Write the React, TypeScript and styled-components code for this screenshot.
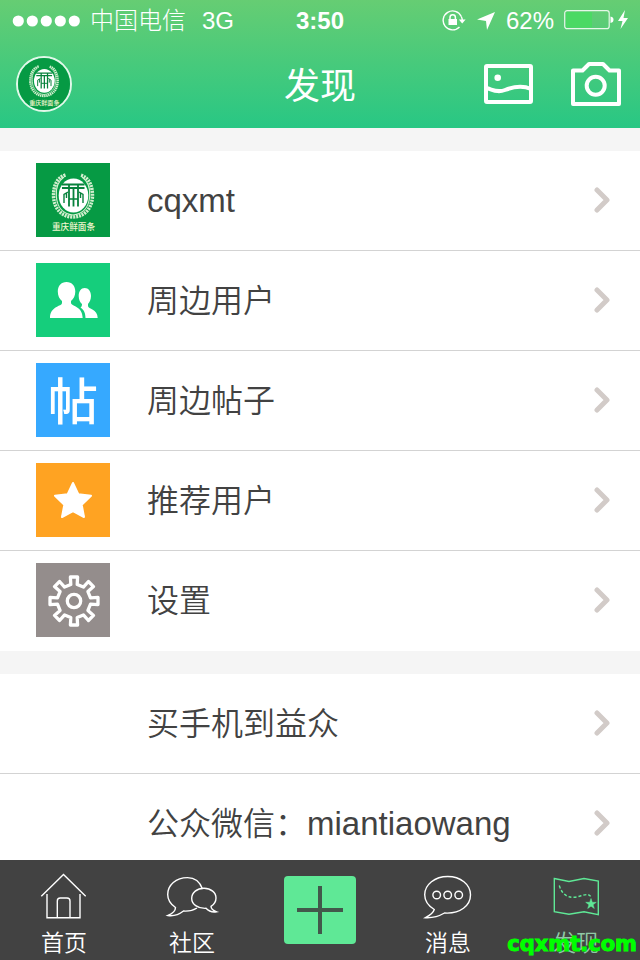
import React from "react";
import styled, { createGlobalStyle } from "styled-components";

const GlobalStyle = createGlobalStyle`
  * { box-sizing: border-box; }
  body {
    margin: 0;
    background: #fff;
    font-family: "Liberation Sans", "Noto Sans CJK SC", sans-serif;
    font-weight: 350;
  }
  button { font: inherit; color: inherit; border: 0; padding: 0; background: none; cursor: pointer; }
  a { color: inherit; text-decoration: none; }
  svg { display: block; flex: none; }
`;

const Screen = styled.div`
  display: flex;
  flex-direction: column;
  height: 100vh;
  background: #f5f5f5;
`;

const Header = styled.header`
  flex: none;
  color: #fff;
  background: linear-gradient(#66cd73, #28c784);
`;

const StatusBar = styled.div`
  display: grid;
  grid-template-columns: 1fr auto 1fr;
  align-items: center;
  height: 40px;
  padding: 2px 12px 0;
  font-size: 24px;
  line-height: 38px;
`;

const StatusGroup = styled.div<{ $end?: boolean }>`
  display: flex;
  align-items: center;
  justify-content: ${(p) => (p.$end ? "flex-end" : "flex-start")};
  gap: 10px;
  white-space: nowrap;
`;

const Carrier = styled.span`
  padding-bottom: 4px;
  font-family: "Noto Sans CJK SC", sans-serif;
  font-weight: 300;
  line-height: 34px;
`;

const Network = styled.span`
  margin-left: 6px;
`;

const Clock = styled.span`
  font-weight: 700;
`;

const NavBar = styled.div`
  display: grid;
  grid-template-columns: 1fr auto 1fr;
  align-items: center;
  height: 88px;
  padding: 0 16px;
`;

const Avatar = styled.button`
  width: 56px;
  height: 56px;
  border: 2px solid #e2f8ea;
  border-radius: 50%;
  overflow: hidden;
`;

const Title = styled.h1`
  margin: 0;
  padding-bottom: 2px;
  font-family: "Noto Sans CJK SC", sans-serif;
  font-size: 36px;
  font-weight: 400;
  line-height: 40px;
`;

const Actions = styled.div`
  display: flex;
  justify-content: flex-end;
  gap: 32px;
`;

const Content = styled.main`
  flex: 1;
  min-height: 0;
  overflow-y: auto;
  scrollbar-width: none;
`;

const Group = styled.ul`
  list-style: none;
  margin: 23px 0 0;
  padding: 0;
  background: #fff;
`;

const Item = styled.li`
  border-bottom: 1px solid #d3d3d3;
  &:last-child { border-color: #fff; }
`;

const RowLink = styled.a`
  display: flex;
  align-items: center;
  padding: 12px 30px 13px 36px;
  color: #424242;
`;

const Tile = styled.span<{ $color: string }>`
  display: flex;
  align-items: center;
  justify-content: center;
  flex: none;
  width: 74px;
  height: 74px;
  background: ${(p) => p.$color};
  color: #fff;
`;

const TileGlyph = styled.span`
  padding-bottom: 4px;
  font-family: "Noto Sans CJK SC", sans-serif;
  font-size: 50px;
  font-weight: 500;
  line-height: 70px;
`;

const RowLabel = styled.span`
  flex: 1;
  margin-left: 37px;
  padding-bottom: 4px;
  font-family: "Noto Sans CJK SC", sans-serif;
  font-size: 32px;
  line-height: 40px;
`;

const Latin = styled.span`
  font-family: "Liberation Sans", sans-serif;
  font-size: 33px;
  line-height: 0;
`;

const TabBar = styled.nav`
  position: relative;
  flex: none;
  display: grid;
  grid-template-columns: repeat(5, 1fr);
  height: 100px;
  background: #424242;
`;

const Tab = styled.a<{ $active?: boolean }>`
  display: flex;
  flex-direction: column;
  align-items: center;
  gap: 9px;
  padding-top: 12px;
  color: ${(p) => (p.$active ? "#5fe896" : "#fff")};
  font-family: "Noto Sans CJK SC", sans-serif;
  font-size: 23px;
  line-height: 24px;
`;

const TabText = styled.span<{ $active?: boolean }>`
  color: ${(p) => (p.$active ? "#8fc9a6" : "#fff")};
`;

const AddButton = styled.button`
  place-self: center;
  display: flex;
  align-items: center;
  justify-content: center;
  width: 72px;
  height: 68px;
  border-radius: 4px;
  && { background: #5fe896; }
`;

const Watermark = styled.span`
  position: absolute;
  right: 3px;
  bottom: 4px;
  color: #00ff00;
  font-family: "DejaVu Sans", sans-serif;
  font-size: 21px;
  font-weight: 700;
  line-height: 24px;
  -webkit-text-stroke: 1px #00ff00;
  pointer-events: none;
`;

function Emblem({ size }: { size: number }) {
  return (
    <svg width={size} height={size} viewBox="0 0 74 74">
      <rect width="74" height="74" fill="#069a44" />
      <g fill="none" stroke="#d3efcf">
        <path d="M29.500 12C20 15 17.500 24 17.500 33C18 46 26 54 37 54C48 54 56 46 56.500 33C56.500 24 54 15 44.500 12" strokeWidth="3.500" strokeDasharray="2 0.900" />
        <path d="M28 14C21 19 19.800 26 20.300 33C21 44 27 51 37 52C47 51 53 44 53.700 33C54.200 26 53 19 46 14" strokeWidth="1.200" />
      </g>
      <ellipse cx="37.500" cy="32.500" rx="14.800" ry="17" fill="#fff" />
      <g fill="none" stroke="#08823c" strokeWidth="1.800">
        <path d="M26 21.500H48.500M26 25H48.500M33 21V43.500M42 21V43.500M37.500 25V43.500" />
        <path d="M28 40V31.500L32 29M47 40V31.500L43 29M30.500 30V35M44.500 30V35M33 36H42" strokeWidth="1.400" />
      </g>
      <text x="37.500" y="66.500" textAnchor="middle" fontFamily="Noto Sans CJK SC, sans-serif" fontSize="8.600" fontWeight="500" fill="#f2f6cf">重庆鲜面条</text>
    </svg>
  );
}

function SignalDots() {
  return (
    <svg width="68" height="12" viewBox="0 0 68 12" fill="#fff">
      {[0, 1, 2, 3, 4].map((i) => (
        <circle key={i} cx={6.3 + i * 14} cy="6" r="5.600" />
      ))}
    </svg>
  );
}

function RotationLock() {
  return (
    <svg width="24" height="22" viewBox="0 0 24 22" fill="none" stroke="#fff">
      <path d="M19.300 6.500A9.500 9.500 0 1 0 17.500 17" strokeWidth="1.400" />
      <path d="M19.300 6.500Q20.300 8.500 20.300 11" strokeWidth="1.400" />
      <path d="M16.800 9.500H23.600L20.200 13.500Z" fill="#fff" stroke="none" />
      <rect x="6.500" y="9" width="8.500" height="6" fill="#fff" stroke="none" />
      <path d="M8 9.500V7.500a2.700 2.700 0 0 1 5.400 0V9.500" strokeWidth="1.500" />
    </svg>
  );
}

function LocationArrow() {
  return (
    <svg width="20" height="20" viewBox="0 0 20 20" fill="#fff">
      <path d="M1 8.500L19 1L11 19L10 10Z" />
    </svg>
  );
}

function Battery() {
  return (
    <svg width="64" height="22" viewBox="0 0 64 22" fill="none">
      <rect x="0.700" y="0.700" width="44.500" height="18" rx="2.500" stroke="#e5f8e8" strokeWidth="1.200" />
      <rect x="2" y="2" width="26" height="15.500" rx="1" fill="#4bd964" />
      <path d="M46.500 6.500Q49.500 7 49.500 9.700T46.500 13Z" fill="#fff" />
      <path d="M61 0L54 11H58.500L56.500 19L64 8H59.500Z" fill="#fff" />
    </svg>
  );
}

function PictureIcon() {
  return (
    <svg width="56" height="48" viewBox="0 0 56 48" fill="none" stroke="#fff" strokeWidth="4" strokeLinejoin="round">
      <rect x="6" y="6" width="45" height="36" rx="1" />
      <circle cx="17.700" cy="17.700" r="3.300" fill="#fff" stroke="none" />
      <path d="M6 28C13 29.500 17 33 25 30C34 26.500 42 25 51 29" />
    </svg>
  );
}

function CameraIcon() {
  return (
    <svg width="56" height="48" viewBox="0 0 56 48" fill="none" stroke="#fff" strokeWidth="4" strokeLinejoin="round">
      <path d="M5 10.500H14.500L21 4H35L41.500 10.500H51V44H5Z" />
      <circle cx="27.700" cy="25.700" r="9" />
    </svg>
  );
}

function Chevron() {
  return (
    <svg width="16" height="26" viewBox="0 0 16 26" fill="none" stroke="#d2cbc8" strokeWidth="5" strokeLinecap="round">
      <path d="M3 3L13 13L3 23" strokeLinejoin="round" />
    </svg>
  );
}

function PeopleIcon() {
  return (
    <svg width="74" height="74" viewBox="0 0 74 74" fill="#fff">
      <path d="M30.500 19C36 19 39.300 23 39.300 28.500C39.300 33 37.500 36 35 38V40C35 43 46.700 43 46.700 55H14C14 43 26 43.500 26 40V38C23.500 36 21.800 33 21.800 28.500C21.800 23 25 19 30.500 19Z" />
      <path d="M48.700 25C52.500 25 55 28.500 55 33C55 36.500 53.500 39.500 52 41V43C52 46 61.700 46 61.700 55H49.500C49.500 49 47 46 44.500 44.500C45.500 44 46 43 46 41C44.300 39.500 42.700 37 42.700 33C42.700 28.500 45 25 48.700 25Z" />
    </svg>
  );
}

function StarIcon() {
  return (
    <svg width="74" height="74" viewBox="0 0 74 74" fill="#fff" stroke="#fff" strokeWidth="2" strokeLinejoin="round">
      <path d="M37 20L42.300 31.200L55 32.800L45.700 41.800L48 54L37 48.200L26 54L28.300 41.800L19 32.800L31.700 31.200Z" />
    </svg>
  );
}

const gearPath =
  Array.from({ length: 8 }, (_, k) => {
    const a = (k * Math.PI) / 4;
    const at = (r: number, w: number) =>
      `${(38 + r * Math.cos(a) - w * Math.sin(a)).toFixed(2)} ${(38 + r * Math.sin(a) + w * Math.cos(a)).toFixed(2)}`;
    return `${k ? "L" : "M"}${at(16.5, -3.2)}L${at(24, -3.6)}L${at(24, 3.6)}L${at(16.5, 3.2)}`;
  }).join("") + "Z";

function GearIcon() {
  return (
    <svg width="74" height="74" viewBox="0 0 74 74" fill="none" stroke="#fff" strokeWidth="3.300" strokeLinejoin="round">
      <path d={gearPath} />
      <circle cx="38" cy="38" r="6.700" />
    </svg>
  );
}

function TabIcon({ children }: { children: React.ReactNode }) {
  return (
    <svg width="56" height="48" viewBox="0 0 56 48" fill="none" stroke="currentColor" strokeWidth="1.400">
      {children}
    </svg>
  );
}

const rows = [
  { color: "#069a44", icon: <Emblem size={74} />, label: <Latin>cqxmt</Latin> },
  { color: "#15ce7c", icon: <PeopleIcon />, label: "周边用户" },
  { color: "#36a9ff", icon: <TileGlyph>帖</TileGlyph>, label: "周边帖子" },
  { color: "#ffa322", icon: <StarIcon />, label: "推荐用户" },
  { color: "#948d8c", icon: <GearIcon />, label: "设置" },
];

const links = [
  { color: "transparent", icon: null, label: "买手机到益众" },
  { color: "transparent", icon: null, label: <>公众微信：<Latin>miantiaowang</Latin></> },
];

function List({ items }: { items: typeof rows | typeof links }) {
  return (
    <Group>
      {items.map((item, i) => (
        <Item key={i}>
          <RowLink href="#">
            <Tile $color={item.color}>{item.icon}</Tile>
            <RowLabel>{item.label}</RowLabel>
            <Chevron />
          </RowLink>
        </Item>
      ))}
    </Group>
  );
}

export default function App() {
  return (
    <Screen>
      <GlobalStyle />
      <Header>
        <StatusBar>
          <StatusGroup>
            <SignalDots />
            <Carrier>中国电信</Carrier>
            <Network>3G</Network>
          </StatusGroup>
          <Clock>3:50</Clock>
          <StatusGroup $end>
            <RotationLock />
            <LocationArrow />
            <span>62%</span>
            <Battery />
          </StatusGroup>
        </StatusBar>
        <NavBar>
          <Avatar aria-label="cqxmt"><Emblem size={52} /></Avatar>
          <Title>发现</Title>
          <Actions>
            <button aria-label="图片"><PictureIcon /></button>
            <button aria-label="相机"><CameraIcon /></button>
          </Actions>
        </NavBar>
      </Header>
      <Content>
        <List items={rows} />
        <List items={links} />
      </Content>
      <TabBar>
        <Tab href="#">
          <TabIcon>
            <path d="M5.300 24.300L27.500 2.500L49.700 24.300M11 22V45.700H44V22M21.300 45.700V29Q21.300 26 24.300 26H31Q34 26 34 29V45.700" />
          </TabIcon>
          <TabText>首页</TabText>
        </Tab>
        <Tab href="#">
          <TabIcon>
            <path d="M38.500 17C36 10 31 5.600 23.500 5.600C12 5.600 3.700 13 3.700 22.500C3.700 28 7 32.500 11.500 35.500C11.500 39 8.500 41.500 4 43.500C9 44.200 15 42.500 19.500 39C25 39.400 29 38.500 33 36" />
            <path d="M40 16.300C47 16.300 52 20.500 52 26C52 29.500 50 32.500 47 34.300C47 36.500 49 38.500 52.500 39.800C48.500 40.500 44.500 39 42 36.300C33.500 36.700 27.700 32 27.700 26.500C27.700 20.500 33 16.300 40 16.300Z" />
          </TabIcon>
          <TabText>社区</TabText>
        </Tab>
        <AddButton aria-label="发布">
          <svg width="48" height="48" viewBox="0 0 48 48" stroke="#42584b" strokeWidth="4">
            <path d="M24 0V48M1 24H47" />
          </svg>
        </AddButton>
        <Tab href="#">
          <TabIcon>
            <path d="M27.700 4.500C40.500 4.500 50.500 12.500 50.500 22.800C50.500 33.500 40.500 42 24.500 41C18.500 44.500 11 46 5.500 45.700C10.500 43 13.500 40 14.300 37.500C8.500 34 4.700 29 4.700 22.800C4.700 12.500 15 4.500 27.700 4.500Z" />
            <circle cx="16.700" cy="23" r="3.800" />
            <circle cx="27.700" cy="23" r="3.800" />
            <circle cx="38.700" cy="23" r="3.800" />
          </TabIcon>
          <TabText>消息</TabText>
        </Tab>
        <Tab href="#" $active>
          <TabIcon>
            <path d="M6.300 6.500L21 9.500L36 6.500L50.300 9V42.700L36 39.700L21 42.300L6.300 39.700Z" />
            <path d="M11.300 13.500C13.500 21 18 25.500 26 25.300C33 25 40 19.500 43 25" strokeDasharray="3 2" />
            <path d="M43 26.500L44.300 30.300H48.300L45.100 32.700L46.300 36.500L43 34.200L39.700 36.500L40.900 32.700L37.700 30.300H41.700Z" fill="currentColor" strokeWidth="0.500" />
          </TabIcon>
          <TabText $active>发现</TabText>
        </Tab>
        <Watermark>cqxmt.com</Watermark>
      </TabBar>
    </Screen>
  );
}
